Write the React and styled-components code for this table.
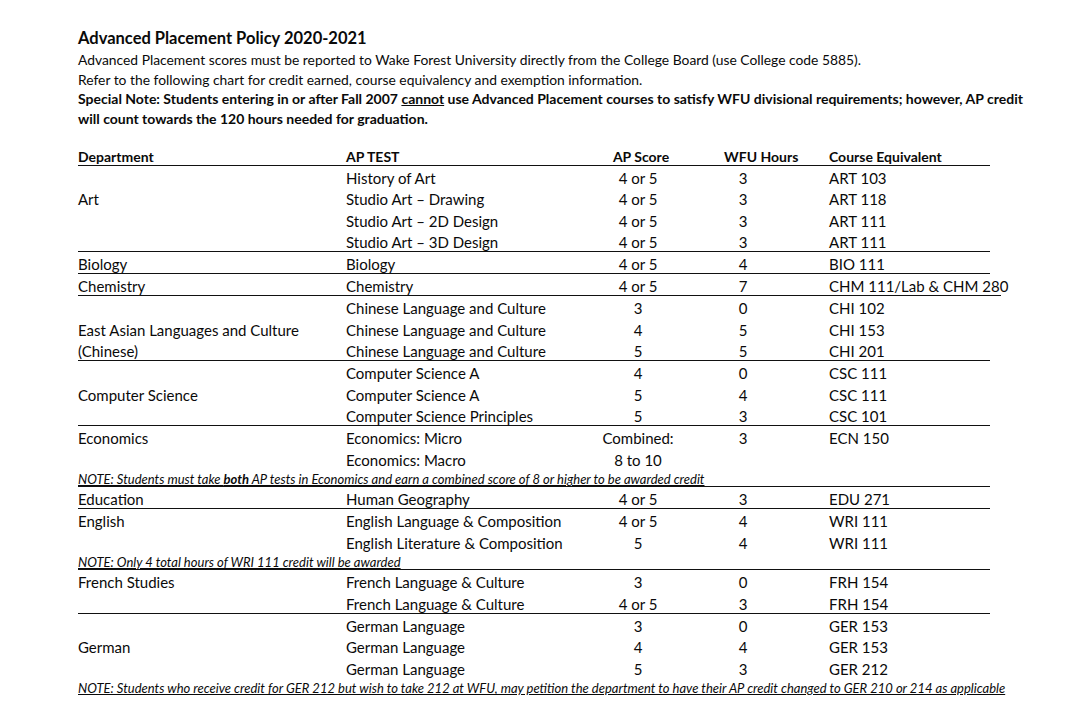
import React from 'react';
import styled, { createGlobalStyle } from 'styled-components';

const GlobalStyle = createGlobalStyle`
  body {
    margin: 0;
    background: #fff;
  }
`;

const Page = styled.main`
  padding: 27px 0 20px 78px;
  font-family: Lato, 'Open Sans', sans-serif;
  color: #0a0a0a;
`;

const Title = styled.h1`
  margin: 0 0 1px;
  font-size: 16.5px;
  font-weight: 700;
  line-height: 22px;
`;

const Para = styled.p`
  margin: 0;
  font-size: ${(p) => (p.$bold ? '14px' : '13.85px')};
  line-height: 19.7px;
  font-weight: ${(p) => (p.$bold ? 700 : 400)};
  white-space: nowrap;
`;

const Table = styled.div`
  margin-top: 19px;
`;

const Section = styled.div`
  display: grid;
  grid-template-columns: 268px 234px 116px 94px 1fr;
  row-gap: 4.5px;
  padding-top: ${(p) => (p.$head ? '0' : '4px')};
  border-bottom: ${(p) => (p.$plain ? 'none' : '1.5px solid #111')};
  width: ${(p) => (p.$wide ? '923px' : '912px')};
`;

const Cell = styled.div`
  grid-column: ${(p) => p.$col};
  grid-row: ${(p) => p.$row};
  font-size: ${(p) => (p.$bold ? '14px' : '15px')};
  line-height: 17px;
  font-weight: ${(p) => (p.$bold ? 700 : 400)};
  text-align: ${(p) => (p.$center ? 'center' : 'left')};
  padding-left: ${(p) => p.$pad || 0}px;
  white-space: nowrap;
`;

const Note = styled.div`
  grid-column: 1 / -1;
  grid-row: ${(p) => p.$row};
  font-size: 13px;
  line-height: 13px;
  font-style: italic;
  text-decoration: underline;
  white-space: nowrap;
  b {
    font-weight: 700;
  }
`;

const sections = [
  {
    depts: [[2, 'Art']],
    rows: [
      ['History of Art', '4 or 5', '3', 'ART 103'],
      ['Studio Art – Drawing', '4 or 5', '3', 'ART 118'],
      ['Studio Art – 2D Design', '4 or 5', '3', 'ART 111'],
      ['Studio Art – 3D Design', '4 or 5', '3', 'ART 111'],
    ],
  },
  {
    depts: [[1, 'Biology']],
    rows: [['Biology', '4 or 5', '4', 'BIO 111']],
  },
  {
    depts: [[1, 'Chemistry']],
    rows: [['Chemistry', '4 or 5', '7', 'CHM 111/Lab & CHM 280']],
    wide: true,
  },
  {
    depts: [
      [2, 'East Asian Languages and Culture'],
      [3, '(Chinese)'],
    ],
    rows: [
      ['Chinese Language and Culture', '3', '0', 'CHI 102'],
      ['Chinese Language and Culture', '4', '5', 'CHI 153'],
      ['Chinese Language and Culture', '5', '5', 'CHI 201'],
    ],
  },
  {
    depts: [[2, 'Computer Science']],
    rows: [
      ['Computer Science A', '4', '0', 'CSC 111'],
      ['Computer Science A', '5', '4', 'CSC 111'],
      ['Computer Science Principles', '5', '3', 'CSC 101'],
    ],
  },
  {
    depts: [[1, 'Economics']],
    rows: [
      ['Economics: Micro', 'Combined:', '3', 'ECN 150'],
      ['Economics: Macro', '8 to 10', '', ''],
    ],
    note: (
      <>
        NOTE: Students must take <b>both</b> AP tests in Economics and earn a combined score of 8 or
        higher to be awarded credit
      </>
    ),
  },
  {
    depts: [[1, 'Education']],
    rows: [['Human Geography', '4 or 5', '3', 'EDU 271']],
  },
  {
    depts: [[1, 'English']],
    rows: [
      ['English Language & Composition', '4 or 5', '4', 'WRI 111'],
      ['English Literature & Composition', '5', '4', 'WRI 111'],
    ],
    note: <>NOTE: Only 4 total hours of WRI 111 credit will be awarded</>,
  },
  {
    depts: [[1, 'French Studies']],
    rows: [
      ['French Language & Culture', '3', '0', 'FRH 154'],
      ['French Language & Culture', '4 or 5', '3', 'FRH 154'],
    ],
  },
  {
    depts: [[2, 'German']],
    rows: [
      ['German Language', '3', '0', 'GER 153'],
      ['German Language', '4', '4', 'GER 153'],
      ['German Language', '5', '3', 'GER 212'],
    ],
    note: (
      <>
        NOTE: Students who receive credit for GER 212 but wish to take 212 at WFU, may petition the
        department to have their AP credit changed to GER 210 or 214 as applicable
      </>
    ),
    plain: true,
  },
];

export default function App() {
  return (
    <Page>
      <GlobalStyle />
      <Title>Advanced Placement Policy 2020-2021</Title>
      <Para>
        Advanced Placement scores must be reported to Wake Forest University directly from the
        College Board (use College code 5885).
      </Para>
      <Para>
        Refer to the following chart for credit earned, course equivalency and exemption
        information.
      </Para>
      <Para $bold>
        Special Note: Students entering in or after Fall 2007 <u>cannot</u> use Advanced Placement
        courses to satisfy WFU divisional requirements; however, AP credit
      </Para>
      <Para $bold>will count towards the 120 hours needed for graduation.</Para>

      <Table>
        <Section $head>
          <Cell $col={1} $row={1} $bold>Department</Cell>
          <Cell $col={2} $row={1} $bold>AP TEST</Cell>
          <Cell $col={3} $row={1} $bold $center $pad={6}>AP Score</Cell>
          <Cell $col={4} $row={1} $bold $center $pad={28}>WFU Hours</Cell>
          <Cell $col={5} $row={1} $bold $pad={39}>Course Equivalent</Cell>
        </Section>
        {sections.map((s, i) => (
          <Section key={i} $wide={s.wide} $plain={s.plain}>
            {s.depts.map(([row, text]) => (
              <Cell key={text} $col={1} $row={row}>
                {text}
              </Cell>
            ))}
            {s.rows.map((r, j) => (
              <React.Fragment key={j}>
                <Cell $col={2} $row={j + 1}>{r[0]}</Cell>
                <Cell $col={3} $row={j + 1} $center>{r[1]}</Cell>
                <Cell $col={4} $row={j + 1} $center>{r[2]}</Cell>
                <Cell $col={5} $row={j + 1} $pad={39}>{r[3]}</Cell>
              </React.Fragment>
            ))}
            {s.note && <Note $row={s.rows.length + 1}>{s.note}</Note>}
          </Section>
        ))}
      </Table>
    </Page>
  );
}
